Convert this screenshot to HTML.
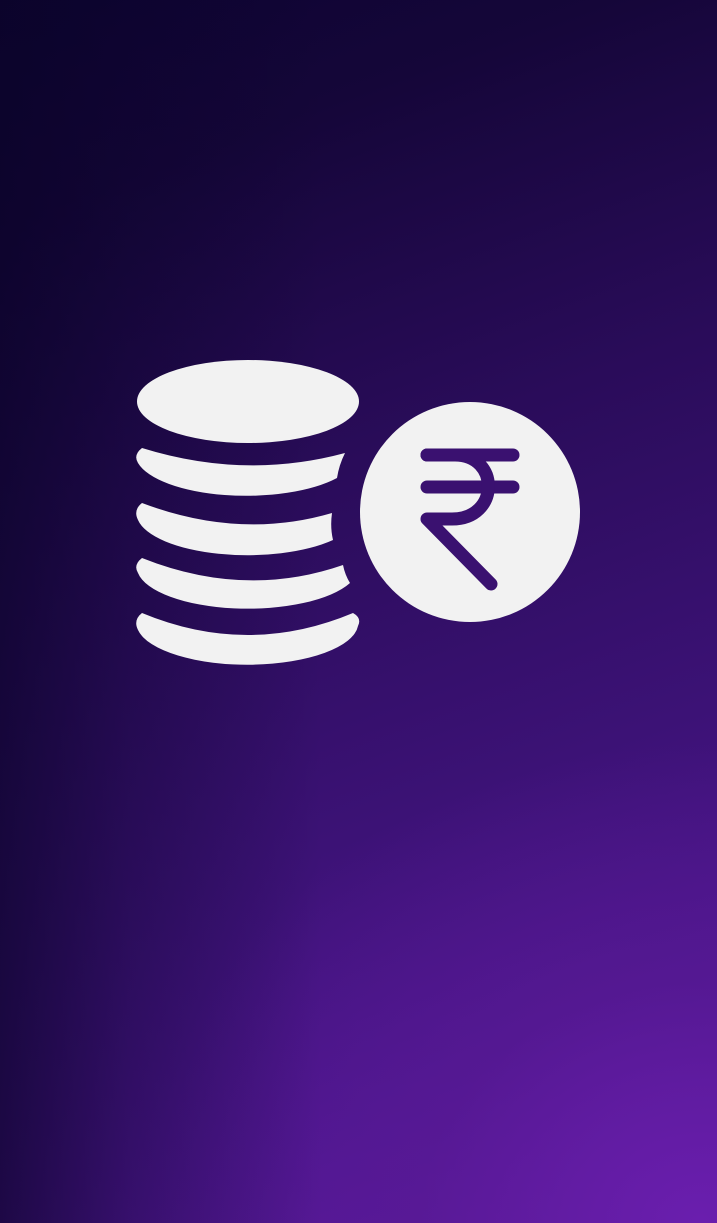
<!DOCTYPE html>
<html><head><style>
html,body{margin:0;padding:0;width:717px;height:1223px;overflow:hidden}
body{background:
linear-gradient(90deg,rgba(10,3,40,0.7) 0%,rgba(10,3,40,0.35) 18%,rgba(10,3,40,0) 45%),
radial-gradient(ellipse 700px 600px at 700px 1223px,#6a1eae 0%,rgba(90,26,150,0.6) 40%,rgba(60,18,110,0) 80%),
linear-gradient(160deg,#0d0432 0%,#150639 15%,#2a0c5a 40%,#3c1276 65%,#4e1690 85%,#5c1a9e 100%);}
svg{position:absolute;left:0;top:0}
</style></head><body>
<svg width="717" height="1223" viewBox="0 0 717 1223">
<g fill="#f2f2f2">
<ellipse cx="248" cy="401.5" rx="111" ry="41.5"/>
<path d="M142 448 Q245 480 345 453 Q339 465 337 478 A111 42 0 0 1 138 463 Q133 455 142 448 Z"/>
<path d="M142 503 Q240 540 332 513 Q330 527 333 540 A111 42 0 0 1 138 520 Q133 510 142 503 Z"/>
<path d="M142 558 Q245 599 343 565 Q345 575 350 583 A111 42 0 0 1 138 573 Q133 565 142 558 Z"/>
<path d="M142 613 Q248 657 353 613 Q362 618 358 626 A111 42 0 0 1 138 630 Q133 620 142 613 Z"/>
<circle cx="470" cy="512" r="110"/>
</g>
<g fill="none" stroke="#3a1170" stroke-width="13" stroke-linecap="round" stroke-linejoin="round">
<path d="M427 455 H513"/>
<path d="M427 487 H513"/>
<path d="M427 455 H455 C500 455 500 519 452 519 H427 L491 584"/>
</g>
</svg>
</body></html>
